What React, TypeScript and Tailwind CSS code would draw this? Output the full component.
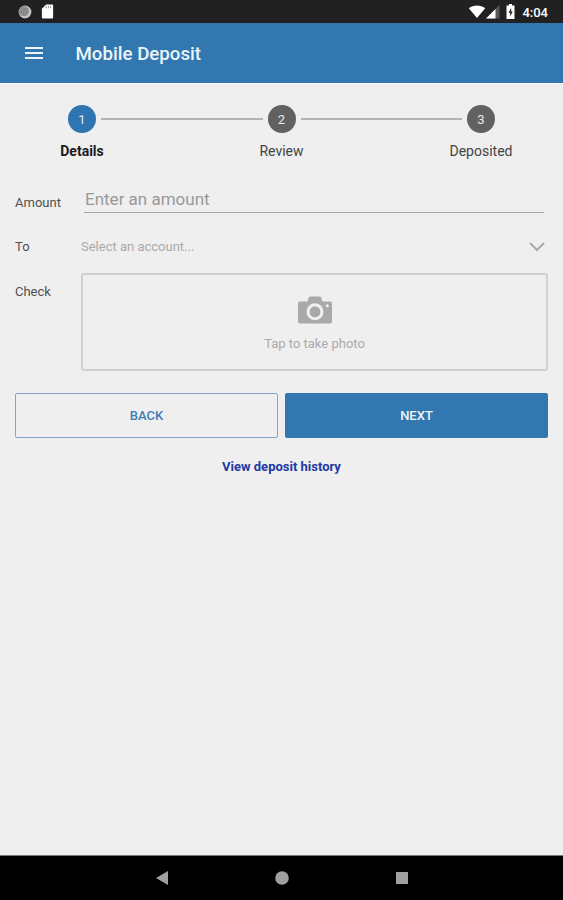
import { Fragment, useState } from "react";

const steps = ["Details", "Review", "Deposited"];

function StatusBar() {
  return (
    <div className="flex h-[23px] shrink-0 items-center justify-between bg-[#212121] pr-[15px] pl-[18px] text-white">
      <div className="flex items-center gap-[9px]">
        <svg width="14" height="14" viewBox="0 0 14 14">
          <circle cx="7" cy="7" r="6.4" fill="#c4c4c4" />
          <circle cx="6" cy="6.2" r="5" fill="#8b8b8b" />
        </svg>
        <svg width="13" height="15" viewBox="0 0 13 16">
          <path
            d="M5 .5h6.2c.8 0 1.3.5 1.3 1.3v12.4c0 .8-.5 1.3-1.3 1.3H1.8C1 15.500.5 15 .5 14.200V5z"
            fill="#fff"
          />
          <path d="M5.200 2v2.500M7.500 2v2.500M9.800 2v2.500" stroke="#999" />
        </svg>
      </div>
      <div className="flex items-center">
        <svg width="18" height="14" viewBox="0 0 18 14">
          <path d="M.8 3.200C5.500-.4 12.500-.4 17.200 3.200L9 13z" fill="#fff" />
        </svg>
        <svg width="14" height="14" viewBox="0 0 14 14">
          <path d="M13.500 0v13.500H0z" fill="#595959" />
          <path d="M9.500 4v9.500H0z" fill="#fff" />
        </svg>
        <svg className="ml-[6px]" width="9" height="15" viewBox="0 0 9 15">
          <path d="M3 0h3v1.500h2.500V15h-8V1.500H3z" fill="#fff" />
          <path d="M5.200 4 2.500 8.800h1.700V12.500l2.500-5H5.200z" fill="#212121" />
        </svg>
        <span className="ml-[7px] pt-px text-[13px] leading-none font-medium">4:04</span>
      </div>
    </div>
  );
}

function Header() {
  return (
    <header className="flex h-[60px] shrink-0 items-center bg-[#3277b0] pt-[3px] pl-[25px]">
      <button className="flex w-[18px] flex-col gap-[3px] pb-[4px]" aria-label="Menu">
        <span className="h-[2px] bg-[#edf4fa]" />
        <span className="h-[2px] bg-[#edf4fa]" />
        <span className="h-[2px] bg-[#edf4fa]" />
      </button>
      <h1 className="ml-[32.500px] text-[18.700px] font-medium text-[#edf4fa]">
        Mobile Deposit
      </h1>
    </header>
  );
}

function Stepper({ current }: { current: number }) {
  return (
    <div className="flex px-[68px] pt-[21px]">
      {steps.map((step, i) => (
        <Fragment key={step}>
          {i > 0 && <div className="mx-[5px] mt-[13px] h-[2px] flex-1 bg-[#b3b3b3]" />}
          <div className="flex w-7 flex-col items-center">
            <div
              className={`flex h-7 w-7 items-center justify-center rounded-full pt-px text-[13px] text-[#eaeaea] ${i === current ? "bg-[#2d76b1]" : "bg-[#616161]"}`}
            >
              {i + 1}
            </div>
            <span
              className={`mt-[8px] text-[14px] leading-5 whitespace-nowrap ${i === current ? "font-bold text-[#1c1c1c]" : "text-[#444]"}`}
            >
              {step}
            </span>
          </div>
        </Fragment>
      ))}
    </div>
  );
}

function App() {
  const [amount, setAmount] = useState("");

  return (
    <div className="flex h-[900px] w-[563px] flex-col overflow-hidden bg-[#efefef] font-[Roboto,sans-serif]">
      <StatusBar />
      <Header />
      <main className="flex-1 border-t border-[#fafafa]">
        <Stepper current={0} />
        <div className="px-[15px] pt-[25px] text-[13px] text-[#505050]">
          <div className="flex h-[28px]">
            <label className="w-[69px] pt-[7px] leading-5">Amount</label>
            <input
              className="mr-[4px] h-[27px] flex-1 border-b-[1.500px] border-[#a5a5a5] pb-px pl-px text-[17px] outline-none placeholder:text-[#999]"
              placeholder="Enter an amount"
              value={amount}
              onChange={(e) => setAmount(e.target.value)}
            />
          </div>
          <div className="mt-[23px] flex h-5 items-center">
            <span className="w-[66px]">To</span>
            <span className="flex-1 text-[#aaa]">Select an account...</span>
            <svg className="mr-[3px]" width="16" height="10" viewBox="0 0 16 10" fill="none">
              <path d="M1 1 8 8l7-7" stroke="#aaa" strokeWidth="2" />
            </svg>
          </div>
          <div className="mt-[16px] flex">
            <span className="w-[66px] pt-[9px] leading-5">Check</span>
            <button className="flex h-[98px] flex-1 flex-col items-center rounded-[3px] border-2 border-[#d0d0d0] pt-[21px] text-[#aaa]">
              <svg width="34" height="28" viewBox="0 0 34 28">
                <path
                  d="M2 5.500h7.500l1.200-4Q11.200.5 12.500.5h9Q22.800.5 23.300 1.500l1.200 4H32q2 0 2 2V25.500q0 2-2 2H2q-2 0-2-2V7.500q0-2 2-2z"
                  fill="#a9a9a9"
                />
                <circle cx="17" cy="15.800" r="7" fill="none" stroke="#f1f1f1" strokeWidth="3" />
                <circle cx="29.300" cy="9.800" r="1.500" fill="#f1f1f1" />
              </svg>
              <span className="mt-[10px] leading-5">Tap to take photo</span>
            </button>
          </div>
          <div className="mt-[22px] grid grid-cols-2 gap-[7px] text-[13px] font-medium">
            <button className="h-[45px] rounded-[2px] border border-[#85a2cb] text-[#3d7db4]">
              BACK
            </button>
            <button className="h-[45px] rounded-[2px] bg-[#3277b0] text-[#edf4fa]">
              NEXT
            </button>
          </div>
          <a className="mt-[19px] block text-center text-[13px] leading-5 font-bold text-[#2039a5]">
            View deposit history
          </a>
        </div>
      </main>
      <nav className="flex h-[45px] shrink-0 items-center justify-center gap-[107px] border-t border-[#777] bg-black">
        <svg width="12" height="14" viewBox="0 0 12 14" fill="#a0a0a0">
          <path d="M12 0v14L0 7z" />
        </svg>
        <svg width="14" height="14" viewBox="0 0 14 14" fill="#a0a0a0">
          <circle cx="7" cy="7" r="6.800" />
        </svg>
        <div className="h-3 w-3 bg-[#a0a0a0]" />
      </nav>
    </div>
  );
}

export default App;
